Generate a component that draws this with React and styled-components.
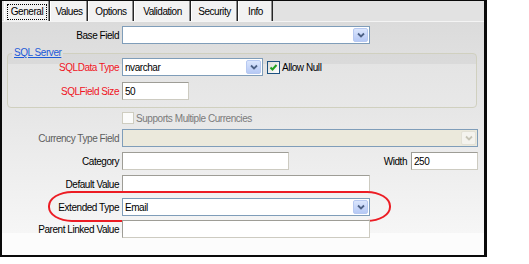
import React from 'react';
import styled, { createGlobalStyle } from 'styled-components';

const GlobalStyle = createGlobalStyle`
  html, body {
    margin: 0;
    padding: 0;
    background: #fff;
  }
  body {
    font-family: 'Liberation Sans', Arial, sans-serif;
    font-size: 10px;
    letter-spacing: -0.45px;
    color: #000;
  }
`

const Frame = styled.div`
  box-sizing: border-box;
  width: 487px;
  height: 257px;
  border-style: solid;
  border-color: #0a0a0a;
  border-width: 1px 3px 2px 2px;
  display: flex;
  flex-direction: column;
  background: #e2e2e2;
`

const TabStrip = styled.div`
  display: flex;
  height: 20px;
  padding-left: 2px;
  background: #e2e2e2;
  border-bottom: 1px solid #f4f4f4;
`

const Tab = styled.div`
  box-sizing: border-box;
  width: ${props => props.$w}px;
  height: 20px;
  display: flex;
  align-items: center;
  justify-content: center;
  padding-top: 1px;
  background: #f2f2f2;
  border-left: 1px solid #ffffff;
  border-right: 1px solid #262626;
  box-shadow: inset -1px 0 0 #8c8c8c;
`

const TabLabel = styled.span`
  box-sizing: border-box;
  height: 16px;
  display: flex;
  align-items: center;
  padding: 0 3px;
  border: 1px dotted ${props => props.$focused ? '#000' : 'transparent'};
`

const Panel = styled.div`
  flex: 1;
  display: flex;
  flex-direction: column;
  padding: 4px 6px 0 0;
  background: linear-gradient(to bottom, #dbdbdb 0, #f6f6f6 211px, #fcfcfc 211px);
`

const Row = styled.div`
  position: relative;
  display: flex;
  align-items: center;
  height: 18px;
  margin-top: ${props => props.$gap || 0}px;
`

const Label = styled.label`
  flex-shrink: 0;
  width: ${props => props.$w || 117}px;
  margin-right: 3px;
  text-align: right;
  white-space: nowrap;
  color: ${props =>
    props.$tone === 'required' ? '#f0141e' :
    props.$tone === 'disabled' ? '#5e5e5e' : '#000'};
`

const TextBox = styled.div`
  box-sizing: border-box;
  width: ${props => props.$w}px;
  height: 18px;
  display: flex;
  align-items: center;
  padding: 0 2px;
  background: #fff;
  border: 1px solid;
  border-color: #9e9d96 #cdcbc1 #cdcbc1 #9e9d96;
`

const Select = styled.div`
  box-sizing: border-box;
  width: ${props => props.$w}px;
  height: 18px;
  display: flex;
  align-items: stretch;
  padding: 1px;
  border: 1px solid #7f9db9;
  background: ${props => props.$disabled ? '#ebe9dc' : '#fff'};
`

const SelectText = styled.span`
  flex: 1;
  display: flex;
  align-items: center;
  padding-left: 1px;
`

const DropButton = styled.span`
  box-sizing: border-box;
  width: 15px;
  display: flex;
  align-items: center;
  justify-content: center;
  border-radius: 2px;
  border: 1px solid ${props => props.$disabled ? '#e3e1d6' : '#b7c9f1'};
  background: ${props => props.$disabled
    ? '#f4f3ee'
    : 'linear-gradient(to bottom, #dbe6fd, #b6c9f5)'};
`

const Group = styled.fieldset`
  min-inline-size: auto;
  margin: 4px 1px 0 5px;
  padding: 0 0 7px 0;
  border: 1px solid #d0d0bf;
  border-radius: 4px;
  background: linear-gradient(to bottom, #d9d9d9 0, #dadada 10px, #e4e4e4 10px, #e8e8e8 100%);
`

const Legend = styled.legend`
  margin-left: 4px;
  padding: 0 2px;
  height: 10px;
  line-height: 10px;
  color: #1c5ad8;
  text-decoration: underline;
  background: #dedede;
`

const Check = styled.span`
  box-sizing: border-box;
  flex-shrink: 0;
  width: ${props => props.$size}px;
  height: ${props => props.$size}px;
  display: flex;
  align-items: center;
  justify-content: center;
  margin-left: ${props => props.$offset || 0}px;
  border: 1px solid ${props => props.$disabled ? '#cfcdc0' : '#1c5180'};
  background: ${props => props.$disabled
    ? '#fbfbfa'
    : 'linear-gradient(135deg, #dcdcd7, #ffffff)'};
`

const CheckText = styled.span`
  margin-left: 2px;
  white-space: nowrap;
  color: ${props => props.$disabled ? '#7b7b7b' : '#000'};
`

const Spacer = styled.span`
  flex: 1;
`

const SideLabel = styled.span`
  margin-right: 4px;
`

const Callout = styled.span`
  position: absolute;
  left: 46px;
  top: -7px;
  width: 343px;
  height: 31px;
  box-sizing: border-box;
  border: 2px solid #ec1c24;
  border-radius: 24px / 15px;
  pointer-events: none;
`

const Chevron = ({ disabled }) => (
  <svg width="8" height="6" viewBox="0 0 8 6">
    <polyline
      points="1,1.5 4,4.5 7,1.5"
      fill="none"
      stroke={disabled ? '#c6c4b6' : '#4d6185'}
      strokeWidth="1.8"
    />
  </svg>
)

const DropDown = ({ w, value, disabled }) => (
  <Select $w={w} $disabled={disabled}>
    <SelectText>{value}</SelectText>
    <DropButton $disabled={disabled}>
      <Chevron disabled={disabled} />
    </DropButton>
  </Select>
)

const tabs = [
  { name: 'General', w: 46 },
  { name: 'Values', w: 38 },
  { name: 'Options', w: 46 },
  { name: 'Validation', w: 57 },
  { name: 'Security', w: 47 },
  { name: 'Info', w: 35 },
]

const App = () => {
  return (
    <>
      <GlobalStyle />
      <Frame>
        <TabStrip>
          {tabs.map((tab, i) => (
            <Tab key={tab.name} $w={tab.w}>
              <TabLabel $focused={i === 0}>{tab.name}</TabLabel>
            </Tab>
          ))}
        </TabStrip>
        <Panel>
          <Row>
            <Label>Base Field</Label>
            <DropDown w={248} value="" />
          </Row>

          <Group>
            <Legend>SQL Server</Legend>
            <Row>
              <Label $w={111} $tone="required">SQLData Type</Label>
              <DropDown w={141} value="nvarchar" />
              <Check $size={13} $offset={4}>
                <svg width="9" height="9" viewBox="0 0 9 9">
                  <polyline points="1.5,4.5 3.5,6.5 7.5,2" fill="none" stroke="#21a121" strokeWidth="2" />
                </svg>
              </Check>
              <CheckText>Allow Null</CheckText>
            </Row>
            <Row $gap={6}>
              <Label $w={111} $tone="required">SQLField Size</Label>
              <TextBox $w={67}>50</TextBox>
            </Row>
          </Group>

          <Row $gap={1}>
            <Label />
            <Check $size={12} $disabled />
            <CheckText $disabled>Supports Multiple Currencies</CheckText>
          </Row>
          <Row $gap={2}>
            <Label $tone="disabled">Currency Type Field</Label>
            <DropDown w={356} value="" disabled />
          </Row>
          <Row $gap={5}>
            <Label>Category</Label>
            <TextBox $w={167} />
            <Spacer />
            <SideLabel>Width</SideLabel>
            <TextBox $w={67}>250</TextBox>
          </Row>
          <Row $gap={5}>
            <Label>Default Value</Label>
            <TextBox $w={248} />
          </Row>
          <Row $gap={5}>
            <Label>Extended Type</Label>
            <DropDown w={248} value="Email" />
            <Callout />
          </Row>
          <Row $gap={4}>
            <Label>Parent Linked Value</Label>
            <TextBox $w={248} />
          </Row>
        </Panel>
      </Frame>
    </>
  );
}

export default App;
